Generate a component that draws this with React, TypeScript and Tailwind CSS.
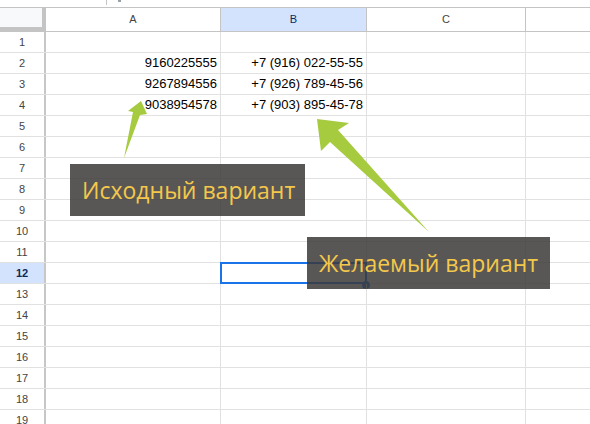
import React from "react";

const cols = [
  { key: "A", label: "A", w: "w-[175px]" },
  { key: "B", label: "B", w: "w-[146px]" },
  { key: "C", label: "C", w: "w-[159px]" },
  { key: "D", label: "", w: "w-[220px]" },
];

const data: Record<number, [string, string]> = {
  2: ["9160225555", "+7 (916) 022-55-55"],
  3: ["9267894556", "+7 (926) 789-45-56"],
  4: ["9038954578", "+7 (903) 895-45-78"],
};

function Row({ n }: { n: number }) {
  const active = n === 12;
  const vals = data[n];
  return (
    <div className="flex h-[21px] border-b border-[#e1e1e1]">
      <div
        className={`w-[46px] shrink-0 flex items-center justify-center border-r-2 border-r-[#c7c7c7] text-[11px] ${
          active ? "bg-[#d3e3fd] text-[#0b2a5c] font-bold" : "bg-white text-[#444]"
        }`}
      >
        {n}
      </div>
      {cols.map((c, i) => (
        <div
          key={c.key}
          className={`${c.w} shrink-0 relative flex items-center justify-end pr-[3px] border-r border-[#e1e1e1] text-[13px] text-black`}
        >
          {vals && i < 2 ? vals[i] : ""}
          {active && c.key === "B" && (
            <>
              <div className="absolute -left-px -top-px right-[-1px] bottom-[-1px] border-2 border-[#1a73e8]" />
              <div className="absolute right-[-4px] bottom-[-6px] w-[8px] h-[8px] rounded-full bg-[#1a73e8]" />
            </>
          )}
        </div>
      ))}
    </div>
  );
}

function Label({ text, className }: { text: string; className: string }) {
  return (
    <div
      className={`absolute h-[52px] bg-[#3c3a38]/85 flex items-center px-3 whitespace-nowrap text-[23px] leading-none text-[#f4c84a] font-['Open_Sans',sans-serif] ${className}`}
    >
      {text}
    </div>
  );
}

export default function App() {
  const rows = Array.from({ length: 19 }, (_, i) => i + 1);
  return (
    <div className="relative w-[590px] h-[424px] overflow-hidden bg-white font-['Liberation_Sans',Arial,sans-serif]">
      {/* toolbar remnant */}
      <div className="h-[7px] relative">
        <div className="absolute left-[106px] top-0 w-px h-[5px] bg-[#c4c4c4]" />
        <div className="absolute left-[118px] top-0 w-[3px] h-[2px] bg-[#9aa0a6]" />
      </div>

      {/* column headers */}
      <div className="flex h-[25px] border-t border-b border-[#c4c4c4]">
        <div className="w-[46px] shrink-0 bg-[#f8f9fa] border-r-[4px] border-b-[4px] border-[#c4c4c4]" />
        {cols.map((c) => (
          <div
            key={c.key}
            className={`${c.w} shrink-0 flex items-center justify-center border-r border-[#c4c4c4] text-[11px] ${
              c.key === "B" ? "bg-[#d3e3fd] text-[#0b2a5c]" : "bg-white text-[#444]"
            }`}
          >
            {c.label}
          </div>
        ))}
      </div>

      {rows.map((n) => (
        <Row key={n} n={n} />
      ))}

      {/* arrows */}
      <svg className="absolute left-0 top-0 pointer-events-none" width="590" height="424">
        <polygon fill="#a6cb3e" points="141,101 147,114 140,115 124,158 133,112 128,111" />
        <polygon fill="#a6cb3e" points="317,119 349,123 338,130 429,232 330,142 321,151" />
      </svg>

      <Label text="Исходный вариант" className="left-[70px] top-[164px] w-[235px]" />
      <Label text="Желаемый вариант" className="left-[307px] top-[237px] w-[243px]" />
    </div>
  );
}
